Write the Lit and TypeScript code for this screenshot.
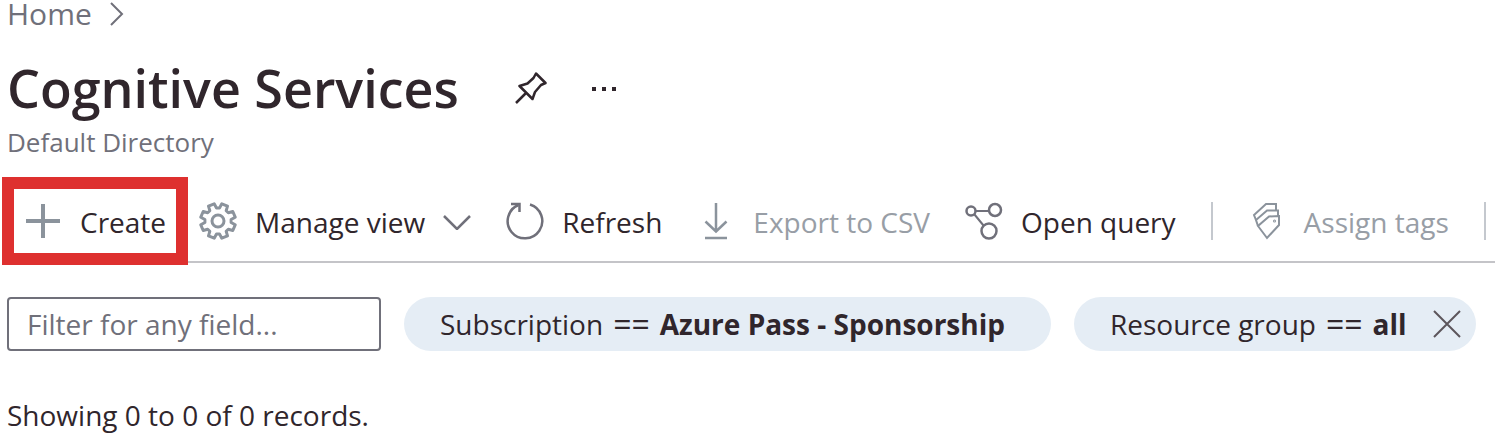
import { LitElement, html, css, svg } from "lit";
import { customElement } from "lit/decorators.js";

/** Outline of a cog with eight teeth, centred in a 38 × 38 box. */
function cogPath(): string {
  const point = (radius: number, degrees: number) => {
    const a = (degrees * Math.PI) / 180;
    return `${(19 + radius * Math.sin(a)).toFixed(1)} ${(19 - radius * Math.cos(a)).toFixed(1)}`;
  };
  const parts: string[] = [];
  for (let i = 0; i < 8; i++) {
    const mid = 22.5 + i * 45;
    parts.push(point(13.2, mid - 16), point(17.6, mid - 10), point(17.6, mid + 10), point(13.2, mid + 16));
  }
  return `M${parts.join(" L")} Z`;
}

const plus = svg`<path stroke-width="4" d="M19 2 V36 M2 19 H36" />`;
const cog = svg`<path stroke-width="3" stroke-linejoin="round" d=${cogPath()} /><circle stroke-width="3" cx="19" cy="19" r="6" />`;
const refresh = svg`<path stroke-width="2.5" d="M24 2.500 A17.300 17.300 0 1 1 12.500 3" /><path stroke-width="2.5" d="M5 2 H13.500 V10" />`;
const download = svg`<path stroke-width="2.5" d="M19 1 V29 M8.500 19.500 L19 29.500 L29.500 19.500 M8 36 H30" />`;
const query = svg`
  <path d="M10.500 9 H24 M9.500 12.500 L18.500 23.500" />
  <g stroke-width="2.5"><circle cx="6" cy="9" r="4.500" /><circle cx="30" cy="8" r="6" /><circle cx="24" cy="29" r="7.500" /></g>`;
const tags = svg`
  <path d="M19 36 L10 24 L21 14.500 L31 14 V23 Z" />
  <path d="M10 24 L8 18 L19 8.500 H30 V14" />
  <path d="M8 18 L6 13 L18 2 H28 V8.500" />
  <circle cx="26.500" cy="19" r="0.500" />`;

@customElement("app-root")
export class AppRoot extends LitElement {
  static styles = css`
    :host {
      display: block;
      box-sizing: border-box;
      background: #fff;
      color: #30262c;
      font-family: "Open Sans", "Noto Sans", sans-serif;
      font-size: 28px;
      line-height: 36px;
    }
    * {
      box-sizing: border-box;
    }
    svg {
      display: block;
      flex: none;
      fill: none;
      stroke: currentColor;
      stroke-width: 2;
    }
    button {
      display: flex;
      align-items: center;
      margin: 0;
      padding: 0;
      border: 0;
      background: none;
      color: inherit;
      font: inherit;
      white-space: nowrap;
      cursor: pointer;
    }
    nav {
      display: flex;
      align-items: center;
      gap: 18px;
      height: 28px;
      padding-left: 7px;
      font-size: 30px;
      line-height: 28px;
      color: #70707a;
    }
    nav a {
      display: block;
      color: inherit;
      text-decoration: none;
    }
    .heading {
      display: flex;
      align-items: center;
      gap: 44px;
      height: 64px;
      margin-top: 28px;
      padding-left: 7px;
    }
    h1 {
      margin: 0;
      padding-right: 12px;
      font-size: 52px;
      line-height: 64px;
      font-weight: 600;
    }
    .directory {
      margin: 4px 0 0;
      padding-left: 7px;
      font-size: 26px;
      color: #70707a;
    }
    .toolbar {
      display: flex;
      align-items: center;
      gap: 35px;
      height: 88px;
      margin: 17px 5px 0 2px;
      background: linear-gradient(#c4c4c8, #c4c4c8) 0 84px / 100% 2px no-repeat;
    }
    .toolbar button {
      gap: 18px;
    }
    .toolbar button span {
      padding-top: 2px;
    }
    .toolbar .create {
      height: 88px;
      margin-right: -24px;
      padding: 0 10px;
      border: 12px solid #de302f;
      background: #fff;
    }
    .toolbar svg {
      color: #8b939c;
    }
    .toolbar .dark svg,
    .toolbar .chevron {
      color: #70707a;
    }
    .toolbar button:disabled {
      color: #989ea6;
      cursor: default;
    }
    .rule {
      width: 2px;
      height: 38px;
      background: #c4c8ce;
    }
    .filters {
      display: flex;
      align-items: center;
      gap: 23px;
      margin: 32px 23px 0 7px;
    }
    input {
      flex: 0 1 374px;
      min-width: 0;
      height: 54px;
      padding: 0 18px;
      border: 2px solid #70707a;
      border-radius: 4px;
      background: #fff;
      color: inherit;
      font: inherit;
    }
    input::placeholder {
      color: #70707a;
      opacity: 1;
    }
    .chip {
      display: flex;
      align-items: center;
      gap: 26px;
      height: 54px;
      padding: 0 15px 0 36px;
      border-radius: 27px;
      background: #e5edf5;
    }
    .chip.fixed {
      padding-right: 46px;
    }
    .chip button {
      gap: 10px;
    }
    .operator {
      font-size: 32px;
      font-weight: 500;
    }
    .remove {
      color: #5c555b;
    }
    .status {
      margin: 46px 0 0;
      padding-left: 7px;
    }
  `;

  private icon(shape: unknown) {
    return html`<svg width="38" height="38" viewBox="0 0 38 38" aria-hidden="true">${shape}</svg>`;
  }

  private condition(field: string, value: string) {
    return html`<button type="button">
      <span>${field}</span><span class="operator">==</span><b>${value}</b>
    </button>`;
  }

  render() {
    return html`
      <nav aria-label="Breadcrumb">
        <a href="#">Home</a>
        <svg width="14" height="24" viewBox="0 0 14 24" aria-hidden="true"><path d="M1 1 L12 12 L1 23" /></svg>
      </nav>
      <header>
        <div class="heading">
          <h1>Cognitive Services</h1>
          <button type="button" aria-label="Pin to dashboard">
            <svg width="32" height="32" viewBox="0 0 32 32">
              <path stroke-width="2.5" stroke-linejoin="round"
                d="M1 31 L11 21 M21 1.500 L30.500 11 L26 13 L20 20 L17.500 27 L4.500 14 L12.500 11.500 L18.500 6 Z" />
            </svg>
          </button>
          <button type="button" aria-label="More actions">
            <svg width="28" height="32" viewBox="0 0 28 32">
              <path stroke-width="4" d="M1 17 h4 M11 17 h4 M21 17 h4" />
            </svg>
          </button>
        </div>
        <p class="directory">Default Directory</p>
      </header>
      <div class="toolbar" role="toolbar" aria-label="Actions">
        <button type="button" class="create">${this.icon(plus)}<span>Create</span></button>
        <button type="button">
          ${this.icon(cog)}<span>Manage view</span>
          <svg class="chevron" width="28" height="18" viewBox="0 0 28 18" aria-hidden="true">
            <path stroke-width="2.5" d="M1 4 L14 17 L27 4" />
          </svg>
        </button>
        <button type="button" class="dark">${this.icon(refresh)}<span>Refresh</span></button>
        <button type="button" disabled>${this.icon(download)}<span>Export to CSV</span></button>
        <button type="button" class="dark">${this.icon(query)}<span>Open query</span></button>
        <div class="rule"></div>
        <button type="button" disabled>${this.icon(tags)}<span>Assign tags</span></button>
        <div class="rule"></div>
      </div>
      <div class="filters">
        <input type="text" aria-label="Filter for any field" placeholder="Filter for any field..." />
        <div class="chip fixed">${this.condition("Subscription", "Azure Pass - Sponsorship")}</div>
        <div class="chip">
          ${this.condition("Resource group", "all")}
          <button type="button" class="remove" aria-label="Remove filter">
            <svg width="28" height="28" viewBox="0 0 28 28"><path d="M1 1 L27 27 M27 1 L1 27" /></svg>
          </button>
        </div>
      </div>
      <p class="status">Showing 0 to 0 of 0 records.</p>
    `;
  }
}
